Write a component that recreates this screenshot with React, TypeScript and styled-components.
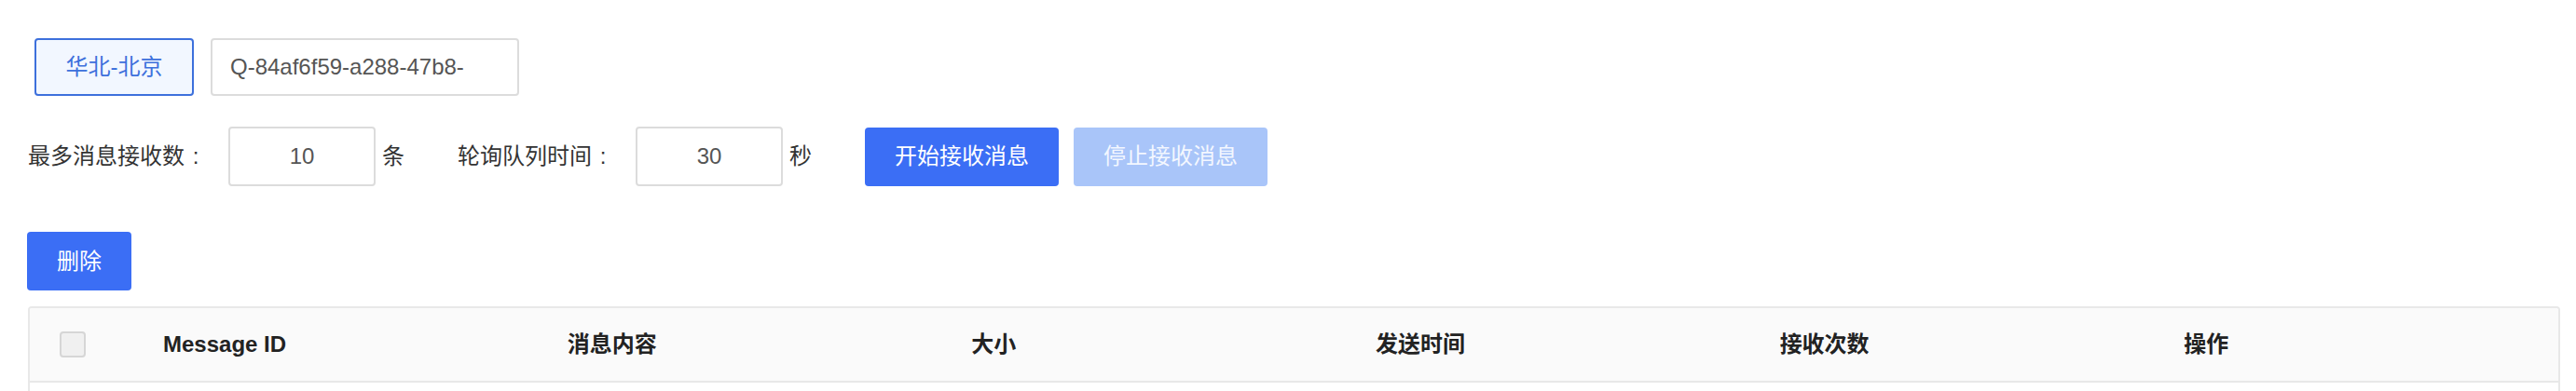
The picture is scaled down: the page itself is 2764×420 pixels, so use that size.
import React from 'react'
import styled, { createGlobalStyle } from 'styled-components'

const GlobalStyle = createGlobalStyle`
  body {
    margin: 0;
    background: #ffffff;
    font-family: 'Liberation Sans', 'Noto Sans CJK SC', sans-serif;
    color: #333333;
  }
`

const StyledPage = styled.div`
  padding: 41px 17px 0 30px;
`

const StyledQueueBar = styled.div`
  display: flex;
  align-items: center;
  gap: 18px;
  margin-left: 7px;
  height: 62px;
`

const StyledRegionButton = styled.button`
  box-sizing: border-box;
  width: 171px;
  height: 62px;
  border: 2px solid #3d70dc;
  border-radius: 4px;
  background-color: #f2f7ff;
  color: #3d70dc;
  font-family: inherit;
  font-size: 24px;
  line-height: 1;
  padding: 0;
  cursor: pointer;
`

const StyledQueueInput = styled.input`
  box-sizing: border-box;
  width: 331px;
  height: 62px;
  border: 2px solid #dcdcdc;
  border-radius: 4px;
  padding: 0 19px;
  font-family: inherit;
  font-size: 24px;
  color: #555555;
  outline: none;
  background: #ffffff;
`

const StyledSettingsRow = styled.div`
  display: flex;
  align-items: center;
  margin-top: 33px;
  height: 64px;
`

const StyledField = styled.div`
  display: flex;
  align-items: center;
  margin-right: 57px;
`

const StyledLabel = styled.span`
  display: flex;
  align-items: center;
  font-size: 24px;
  line-height: 1;
  color: #333333;
  margin-right: 23px;
`

const StyledColon = styled.span`
  display: inline-block;
  width: 24px;
  text-align: center;
`

const StyledNumberInput = styled.input`
  box-sizing: border-box;
  width: 158px;
  height: 64px;
  border: 2px solid #dcdcdc;
  border-radius: 4px;
  text-align: center;
  font-family: inherit;
  font-size: 24px;
  color: #555555;
  outline: none;
  background: #ffffff;
`

const StyledUnit = styled.span`
  font-size: 24px;
  line-height: 1;
  color: #333333;
  margin-left: 7px;
`

const StyledActions = styled.div`
  display: flex;
  gap: 16px;
`

const StyledPrimaryButton = styled.button<{ $disabled?: boolean; $width: number }>`
  box-sizing: border-box;
  width: ${(p) => p.$width}px;
  height: 63px;
  border: none;
  border-radius: 4px;
  background-color: ${(p) => (p.$disabled ? '#a9c5f9' : '#3b6ef5')};
  color: ${(p) => (p.$disabled ? '#f3f7ff' : '#ffffff')};
  font-family: inherit;
  font-size: 24px;
  line-height: 1;
  padding: 0;
  cursor: ${(p) => (p.$disabled ? 'not-allowed' : 'pointer')};
`

const StyledToolbar = styled.div`
  margin-top: 49px;
  margin-left: -1px;
  height: 63px;
`

const StyledTableWrap = styled.div`
  margin-top: 17px;
  border: 2px solid #e8e8e8;
  border-bottom: none;
  border-radius: 4px 4px 0 0;
  overflow: hidden;
`

const StyledTable = styled.table`
  width: 100%;
  border-collapse: collapse;
  table-layout: fixed;
`

const StyledHeadCell = styled.th`
  height: 78px;
  padding: 0 0 0 32px;
  background-color: #fafafa;
  border-bottom: 2px solid #e8e8e8;
  text-align: left;
  font-size: 24px;
  font-weight: 700;
  line-height: 1;
  color: #222222;
  vertical-align: middle;
`

const StyledBodyCell = styled.td`
  height: 90px;
  padding: 0 0 0 32px;
  border-bottom: 2px solid #e8e8e8;
`

const StyledCheckbox = styled.span`
  display: block;
  box-sizing: border-box;
  width: 28px;
  height: 28px;
  border: 2px solid #d6d6d6;
  border-radius: 4px;
  background-color: #f0f0f0;
`

const columns = ['Message ID', '消息内容', '大小', '发送时间', '接收次数', '操作']

export default function App() {
  return (
    <>
      <GlobalStyle />
      <StyledPage>
        <StyledQueueBar>
          <StyledRegionButton>华北-北京</StyledRegionButton>
          <StyledQueueInput readOnly value="Q-84af6f59-a288-47b8-" />
        </StyledQueueBar>

        <StyledSettingsRow>
          <StyledField>
            <StyledLabel>
              最多消息接收数<StyledColon>:</StyledColon>
            </StyledLabel>
            <StyledNumberInput readOnly value="10" />
            <StyledUnit>条</StyledUnit>
          </StyledField>
          <StyledField>
            <StyledLabel>
              轮询队列时间<StyledColon>:</StyledColon>
            </StyledLabel>
            <StyledNumberInput readOnly value="30" />
            <StyledUnit>秒</StyledUnit>
          </StyledField>
          <StyledActions>
            <StyledPrimaryButton $width={208}>开始接收消息</StyledPrimaryButton>
            <StyledPrimaryButton $width={208} $disabled>
              停止接收消息
            </StyledPrimaryButton>
          </StyledActions>
        </StyledSettingsRow>

        <StyledToolbar>
          <StyledPrimaryButton $width={112}>删除</StyledPrimaryButton>
        </StyledToolbar>

        <StyledTableWrap>
          <StyledTable>
            <colgroup>
              <col style={{ width: 111 }} />
              {columns.map((c) => (
                <col key={c} />
              ))}
            </colgroup>
            <thead>
              <tr>
                <StyledHeadCell>
                  <StyledCheckbox />
                </StyledHeadCell>
                {columns.map((c) => (
                  <StyledHeadCell key={c}>{c}</StyledHeadCell>
                ))}
              </tr>
            </thead>
            <tbody>
              <tr>
                <StyledBodyCell colSpan={columns.length + 1} />
              </tr>
            </tbody>
          </StyledTable>
        </StyledTableWrap>
      </StyledPage>
    </>
  )
}
